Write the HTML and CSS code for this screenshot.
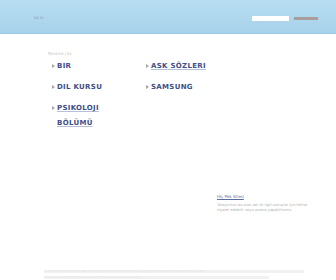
FILE: index.html
```html
<!DOCTYPE html>
<html lang="en">
<head>
    <meta charset="UTF-8">
    <meta name="viewport" content="width=device-width, initial-scale=1.0">
    <title>bz.io</title>
    <link rel="stylesheet" href="styles.css">
</head>
<body>

    <div class="header">
        <div class="logo">bz.io</div>
        <div class="search">
            <input type="text" class="search-box">
            <span class="search-btn">Search Ads</span>
        </div>
    </div>

    <div class="content">
        <div class="crumbs">Related | bz</div>

        <ul class="links">
            <li><a href="#">BIR</a></li>
            <li><a href="#" class="under">ASK SÖZLERI</a></li>
            <li><a href="#">DIL KURSU</a></li>
            <li><a href="#">SAMSUNG</a></li>
            <li class="narrow"><a href="#" class="under">PSIKOLOJI BÖLÜMÜ</a></li>
        </ul>

        <div class="side">
            <div class="side-title">Hiç Pek Sitesi</div>
            <p>Tarayıcınızı bu alan adı ile ilgili sonuçlar için tekrar ziyaret edebilir veya arama yapabilirsiniz.</p>
        </div>
    </div>

    <div class="footer">
        <div class="foot-line">This domain may be for sale. Privacy policy and terms of service apply to all ad listings shown on this page.</div>
        <div class="foot-line short">The sponsored listings displayed above are served automatically.</div>
    </div>

</body>
</html>
```

FILE: styles.css
```css
body {
    margin: 0;
    background-color: #fff;
    font-family: "DejaVu Sans", Verdana, sans-serif;
}
.header {
    height: 33px;
    display: flex;
    align-items: center;
    justify-content: space-between;
    padding: 0 18px 0 34px;
    background: linear-gradient(#b7ddf2, #a7d2ea);
    border-bottom: 1px solid #9cc6de;
}
.logo {
    font-size: 4px;
    color: #8aa3b5;
    padding-top: 1px;
}
.search {
    display: flex;
    align-items: center;
    gap: 5px;
    padding-top: 3px;
}
.search-box {
    width: 37px;
    height: 5px;
    padding: 0;
    border: 0;
    background-color: #fff;
}
.search-btn {
    width: 24px;
    height: 3px;
    line-height: 3px;
    overflow: hidden;
    background-color: #a89c9c;
    color: #a89c9c;
    font-size: 3px;
}
.content {
    padding: 0 18px 0 48px;
}
.crumbs {
    margin-top: 17px;
    font-size: 4px;
    color: #c8c8c8;
}
.links {
    list-style: none;
    margin: 3px 0 0 4px;
    padding: 0;
    display: grid;
    grid-template-columns: 94px 100px;
    row-gap: 6px;
}
.links li {
    position: relative;
    padding-left: 5px;
    font-size: 7px;
    line-height: 15px;
}
.links li.narrow {
    width: 52px;
}
.links li::before {
    content: "";
    position: absolute;
    left: 0;
    top: 5px;
    border-left: 3px solid #a6a6a6;
    border-top: 2px solid transparent;
    border-bottom: 2px solid transparent;
}
.links a {
    font-weight: bold;
    color: #3f4f86;
    text-decoration: none;
    letter-spacing: 0.3px;
}
.links a.under {
    text-decoration: underline;
    text-decoration-color: #b8c0d8;
}
.side {
    margin: 63px 0 0 169px;
    width: 100px;
}
.side-title {
    font-size: 4px;
    color: #5a6fa0;
    text-decoration: underline;
}
.side p {
    margin: 4px 0 0;
    font-size: 3.6px;
    line-height: 5px;
    color: #b0b0b0;
}
.footer {
    margin: 57px 32px 0 44px;
}
.foot-line {
    height: 3px;
    line-height: 3px;
    overflow: hidden;
    font-size: 3px;
    color: #e6e6e6;
    background-color: #f1f1f1;
    margin-bottom: 3px;
}
.foot-line.short {
    width: 225px;
}
```
